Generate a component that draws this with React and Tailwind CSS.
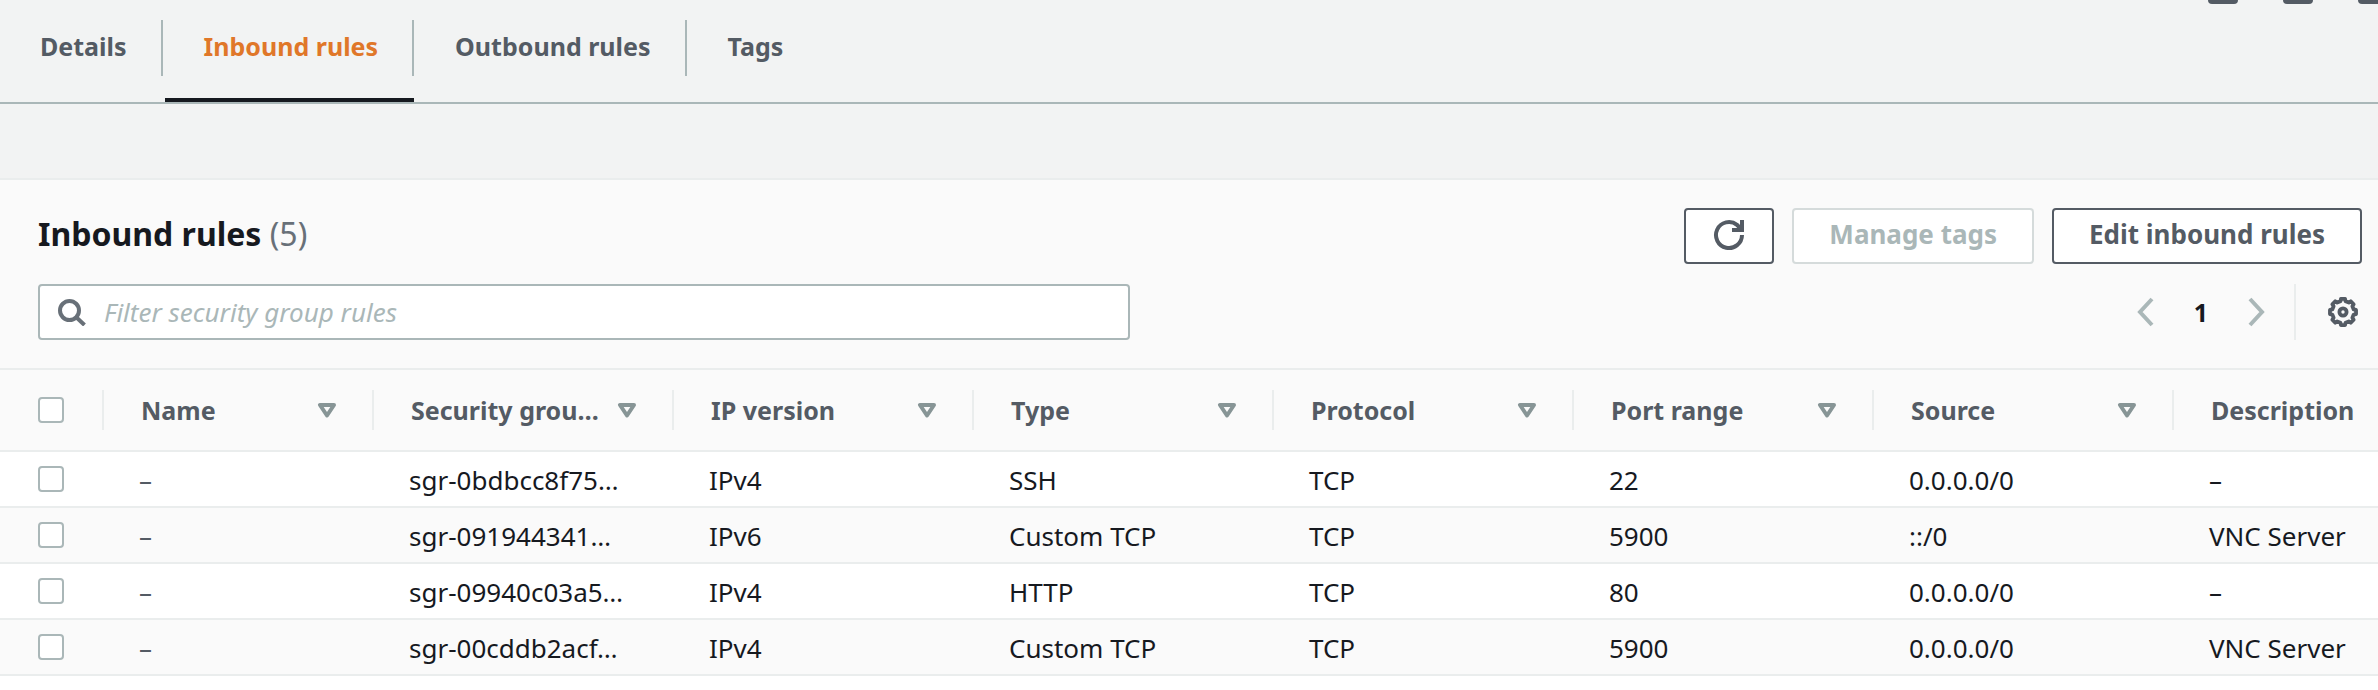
const TABS = ["Details", "Inbound rules", "Outbound rules", "Tags"];
const ACTIVE_TAB = "Inbound rules";

const COLUMNS = [
  { label: "Name", sortable: true },
  { label: "Security grou…", sortable: true },
  { label: "IP version", sortable: true },
  { label: "Type", sortable: true },
  { label: "Protocol", sortable: true },
  { label: "Port range", sortable: true },
  { label: "Source", sortable: true },
  { label: "Description", sortable: false },
];

const RULES = [
  ["–", "sgr-0bdbcc8f75…", "IPv4", "SSH", "TCP", "22", "0.0.0.0/0", "–"],
  ["–", "sgr-091944341…", "IPv6", "Custom TCP", "TCP", "5900", "::/0", "VNC Server"],
  ["–", "sgr-09940c03a5…", "IPv4", "HTTP", "TCP", "80", "0.0.0.0/0", "–"],
  ["–", "sgr-00cddb2acf…", "IPv4", "Custom TCP", "TCP", "5900", "0.0.0.0/0", "VNC Server"],
];

function gearPath(cx, cy, outer, inner, teeth) {
  const step = (Math.PI * 2) / teeth;
  const points = [];
  for (let i = 0; i < teeth; i++) {
    const mid = i * step - Math.PI / 2;
    [[-0.3, inner], [-0.2, outer], [0.2, outer], [0.3, inner]].forEach(([offset, r]) => {
      const a = mid + offset * step;
      points.push(`${(cx + r * Math.cos(a)).toFixed(2)} ${(cy + r * Math.sin(a)).toFixed(2)}`);
    });
  }
  return `M${points.join("L")}Z`;
}

function SearchIcon() {
  return (
    <svg viewBox="0 0 28 28" className="size-7 shrink-0" fill="none" stroke="#687078" strokeWidth="4" aria-hidden="true">
      <circle cx="11.5" cy="12.5" r="9.5" />
      <path d="M18 19l8.5 8" />
    </svg>
  );
}

function RefreshIcon() {
  return (
    <svg viewBox="0 0 32 32" className="size-8" fill="none" stroke="#545b64" strokeWidth="4" aria-hidden="true">
      <path d="M29 16a13 13 0 1 1-5-10.2L28 10" />
      <path d="M29 1v10H19" />
    </svg>
  );
}

function GearIcon() {
  return (
    <svg viewBox="0 0 32 32" className="size-8" fill="none" stroke="#545b64" strokeWidth="3.8" strokeLinejoin="round" aria-hidden="true">
      <path d={gearPath(16, 16, 13.2, 11, 8)} />
      <circle cx="16" cy="16" r="3.6" />
    </svg>
  );
}

function Chevron({ d }) {
  return (
    <svg viewBox="0 0 18 30" className="h-[30px] w-[18px]" fill="none" stroke="#aab7b8" strokeWidth="4" aria-hidden="true">
      <path d={d} />
    </svg>
  );
}

function SortIcon() {
  return (
    <svg viewBox="0 0 20 16" className="h-4 w-5 shrink-0" fill="none" stroke="#879596" strokeWidth="4" strokeLinejoin="round" aria-hidden="true">
      <path d="M3 3h14l-7 10.5z" />
    </svg>
  );
}

function Checkbox({ label }) {
  return (
    <input
      type="checkbox"
      aria-label={label}
      className="block size-[26px] appearance-none rounded-sm border-2 border-[#aab7b8] bg-white checked:bg-[#0073bb]"
    />
  );
}

export default function App() {
  return (
    <div className="relative min-h-screen overflow-x-hidden bg-white font-['Noto_Sans',sans-serif] text-[26px] leading-9 text-[#16191f]">
      <div className="absolute top-0 right-0 flex gap-[45px]" aria-hidden="true">
        <span className="h-1 w-[30px] rounded-b-sm bg-[#545b64]" />
        <span className="h-1 w-[30px] rounded-b-sm bg-[#545b64]" />
        <span className="h-1 w-5 rounded-bl-sm bg-[#545b64]" />
      </div>

      <div className="bg-[#f2f3f3] pb-[74px]">
        <div role="tablist" className="flex h-[104px] border-b-2 border-[#aab7b8]">
          {TABS.map((tab) => {
            const active = tab === ACTIVE_TAB;
            return (
              <button
                key={tab}
                type="button"
                role="tab"
                aria-selected={active}
                className="group relative flex pt-5 text-[25px] font-bold text-[#545b64] aria-selected:text-[#e07729]"
              >
                <span className="flex h-14 items-center border-r-2 border-[#aab7b8] pr-[34px] pb-1 pl-[41px] group-first:pl-10 group-last:border-r-0">
                  {tab}
                </span>
                {active && <span className="absolute right-0 bottom-0 left-0.5 h-1 bg-[#16191f]" />}
              </button>
            );
          })}
        </div>
      </div>

      <section className="border-t-2 border-[#eaeded] bg-[#fafafa]">
        <header className="flex flex-col gap-5 pt-7 pr-4 pb-7 pl-[38px]">
          <div className="flex items-center justify-between">
            <h2 className="pb-1 text-[32px] leading-10 font-bold">
              Inbound rules <span className="font-normal text-[#687078]">(5)</span>
            </h2>
            <div className="flex gap-[18px] font-bold text-[#545b64]">
              <button
                type="button"
                aria-label="Refresh"
                className="flex h-14 w-[90px] items-center justify-center rounded-sm border-2 border-[#545b64] bg-white pb-0.5"
              >
                <RefreshIcon />
              </button>
              <button
                type="button"
                disabled
                className="flex h-14 items-center justify-center rounded-sm border-2 border-[#d5dbdb] bg-white px-[35px] pb-1 text-[#aab7b8]"
              >
                Manage tags
              </button>
              <button
                type="button"
                className="flex h-14 items-center justify-center rounded-sm border-2 border-[#545b64] bg-white px-[35px] pb-1"
              >
                Edit inbound rules
              </button>
            </div>
          </div>

          <div className="flex items-center justify-between">
            <label className="flex h-14 w-[1092px] items-center gap-[18px] rounded-sm border-2 border-[#aab7b8] bg-white pl-[18px]">
              <SearchIcon />
              <input
                type="text"
                aria-label="Filter security group rules"
                placeholder="Filter security group rules"
                className="min-w-0 grow bg-transparent outline-none placeholder:text-[#aab7b8] placeholder:italic"
              />
            </label>
            <div className="flex h-14 items-center pr-[3px]">
              <button type="button" aria-label="Previous page">
                <Chevron d="M16 2L4 15l12 13" />
              </button>
              <button type="button" aria-label="Page 1" className="w-[94px] text-center text-[25px] font-bold">
                1
              </button>
              <button type="button" aria-label="Next page">
                <Chevron d="M2 2l12 13L2 28" />
              </button>
              <div className="ml-7 flex h-14 items-center border-l-2 border-[#eaeded] pl-[31px]">
                <button type="button" aria-label="Preferences">
                  <GearIcon />
                </button>
              </div>
            </div>
          </div>
        </header>

        <table className="w-full table-fixed border-collapse text-left">
          <colgroup>
            <col className="w-[104px]" />
            <col className="w-[270px]" />
            <col className="w-[300px]" />
            <col className="w-[300px]" />
            <col className="w-[300px]" />
            <col className="w-[300px]" />
            <col className="w-[300px]" />
            <col className="w-[300px]" />
            <col />
          </colgroup>
          <thead>
            <tr className="h-[82px] border-y-2 border-[#eaeded] text-[25px] text-[#545b64]">
              <th scope="col" className="p-0">
                <div className="flex h-10 items-center border-r-2 border-[#eaeded] pl-[38px]">
                  <Checkbox label="Select all rules" />
                </div>
              </th>
              {COLUMNS.map(({ label, sortable }) => (
                <th key={label} scope="col" className="p-0 font-bold">
                  {sortable ? (
                    <button
                      type="button"
                      className="flex h-10 w-full items-center justify-between border-r-2 border-[#eaeded] pr-[35px] pl-[37px] text-left whitespace-nowrap"
                    >
                      {label}
                      <SortIcon />
                    </button>
                  ) : (
                    <div className="flex h-10 items-center pl-[37px]">{label}</div>
                  )}
                </th>
              ))}
            </tr>
          </thead>
          <tbody>
            {RULES.map((rule) => (
              <tr key={rule[1]} className="h-14 border-b-2 border-[#eaeded] odd:bg-white even:bg-[#fafafa]">
                <td className="p-0 pl-[38px]">
                  <Checkbox label={`Select ${rule[1]}`} />
                </td>
                {rule.map((value, i) => (
                  <td key={i} className="truncate p-0 pt-0.5 pl-[35px] nth-2:text-[#545b64]">
                    {value}
                  </td>
                ))}
              </tr>
            ))}
          </tbody>
        </table>
      </section>
    </div>
  );
}
